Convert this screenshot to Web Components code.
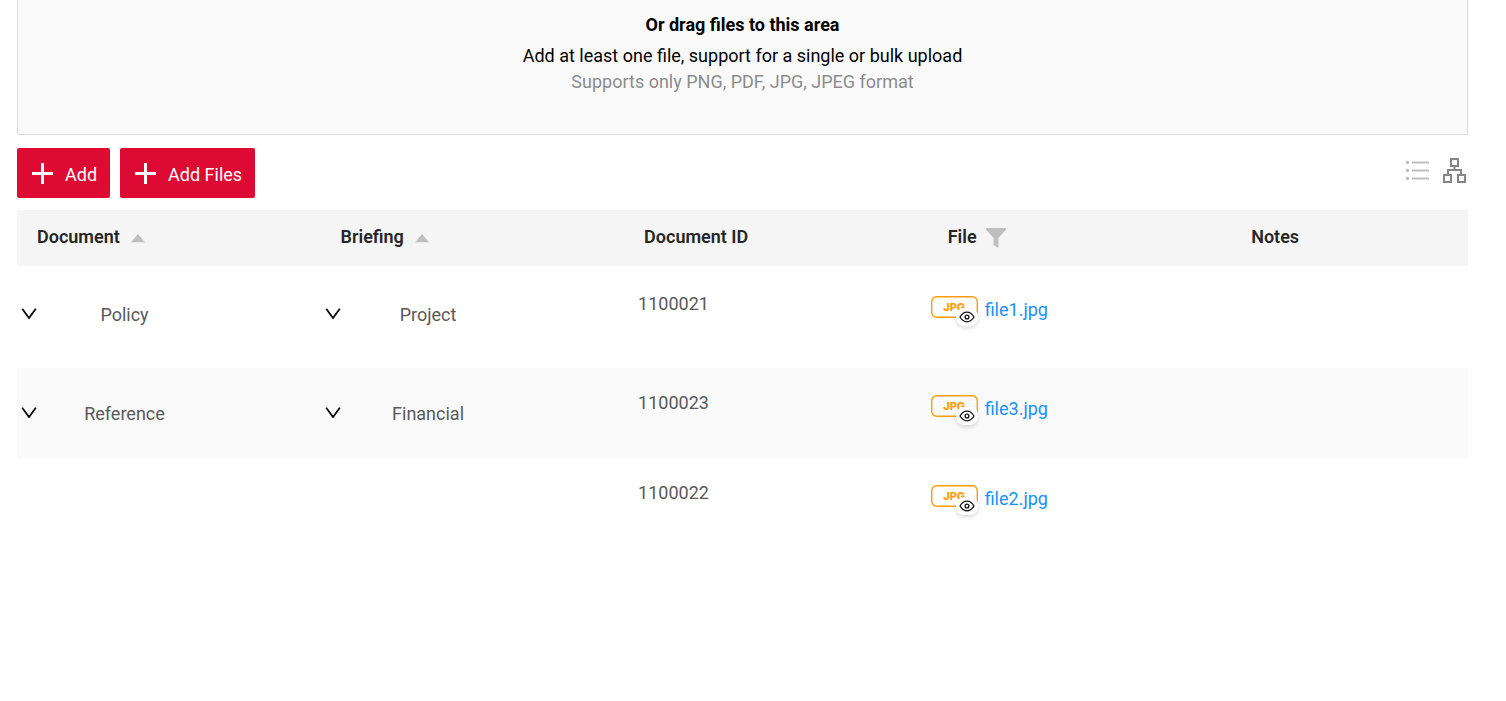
<!DOCTYPE html>
<html lang="en">
<head>
<meta charset="utf-8">
<title>Documents</title>
<style>
  body { margin: 0; background: #fff; font: 18px/26px Roboto, sans-serif; color: #595959; }
</style>
</head>
<body>
<documents-page></documents-page>
<script>
const define = (name, html, setup) => {
  const template = document.createElement('template');
  template.innerHTML = html;
  customElements.define(name, class extends HTMLElement {
    constructor() {
      super();
      this.attachShadow({ mode: 'open' }).append(template.content.cloneNode(true));
    }
    connectedCallback() { if (setup) setup(this, this.shadowRoot); }
  });
};

define('drop-area', `
  <style>
    :host { display: block; background: #fafafa; border: 1px solid #d9d9d9; border-top: 0;
            border-radius: 0 0 2px 2px; text-align: center; padding: 12px 16px 39px; color: #000; }
    p { margin: 0; }
    .title { font-weight: 700; margin-bottom: 5px; }
    .hint { color: #8c8c8c; }
  </style>
  <p class="title"><slot name="title"></slot></p>
  <p><slot></slot></p>
  <p class="hint"><slot name="hint"></slot></p>`);

define('add-button', `
  <style>
    :host { display: block; }
    button { display: flex; align-items: center; gap: 12px; height: 50px; padding: 4px 13px 0 15px; border: 0;
             border-radius: 2px; background: #dd0a34; color: #fff; font: inherit; cursor: pointer; }
    svg { display: block; width: 21px; height: 21px; margin-bottom: 4px; }
  </style>
  <button type="button">
    <svg viewBox="0 0 21 21" aria-hidden="true"><path d="M9 0h3v9h9v3h-9v9H9v-9H0V9h9z" fill="#fff"/></svg>
    <span><slot></slot></span>
  </button>`);

define('view-switch', `
  <style>
    :host { display: flex; gap: 12px; align-items: center; }
    button { display: block; border: 0; padding: 0; background: none; cursor: pointer; }
    svg { display: block; width: 25px; height: 26px; }
  </style>
  <button type="button" aria-label="List view">
    <svg viewBox="0 0 25 26" fill="none" stroke="#bfbfbf" stroke-width="2.200">
      <path d="M7 5.500h17M7 13.500h17M7 21.500h17"/>
      <g fill="#bfbfbf" stroke="none"><circle cx="2.5" cy="5.500" r="1.700"/><circle cx="2.5" cy="13.500" r="1.700"/><circle cx="2.5" cy="21.500" r="1.700"/></g>
    </svg>
  </button>
  <button type="button" aria-label="Tree view">
    <svg viewBox="0 0 25 26" fill="none" stroke="#858585" stroke-width="2">
      <path d="M9 2h7v7H9zM2 18h7v7H2zM16 18h7v7h-7z"/><path d="M12.500 9v4M6 18v-5h13v5"/>
    </svg>
  </button>`);

define('column-title', `
  <style>
    :host { display: flex; align-items: center; }
    button { display: none; border: 0; padding: 0; background: none; cursor: pointer; }
    :host([sortable]) .sort, :host([filterable]) .filter { display: block; }
    .sort { margin: 3px 0 0 11px; }
    .filter { margin: 2px 0 0 9px; }
    svg { display: block; }
  </style>
  <span><slot></slot></span>
  <button class="sort" type="button" aria-label="Sort">
    <svg width="14" height="9" viewBox="0 0 14 9"><path d="M7 0l7 8.200H0z" fill="#bfbfbf"/></svg>
  </button>
  <button class="filter" type="button" aria-label="Filter">
    <svg width="20" height="20" viewBox="0 0 20 20"><path d="M0 0h20v1.500L12.500 10v10L7.500 17.200V10L0 1.500z" fill="#bfbfbf"/></svg>
  </button>`);

define('tree-label', `
  <style>
    :host { display: flex; align-items: center; max-width: 191px; }
    button { flex: none; border: 0; padding: 0 0 2px; background: none; cursor: pointer; }
    svg { display: block; width: 16px; height: 12px; }
    span { flex: 1; text-align: center; }
  </style>
  <button type="button" aria-label="Collapse">
    <svg viewBox="0 0 16 12" fill="none" stroke="#000" stroke-width="1.700"><path d="M1.200 .8L8 10L14.800 .8"/></svg>
  </button>
  <span><slot></slot></span>`);

define('file-link', `
  <style>
    :host { display: flex; align-items: center; gap: 7px; }
    .type { position: relative; width: 47px; height: 22px; font: 800 11px/22px Inter, sans-serif;
            color: #ff9d0a; text-align: center; margin-bottom: 5px; }
    .frame { position: absolute; inset: 0; }
    button { position: absolute; right: 0; bottom: -8px; width: 22px; height: 18px; border: 0; padding: 0;
             border-radius: 8px; background: #fff; box-shadow: 0 2px 4px rgba(0, 0, 0, .15); cursor: pointer;
             display: grid; place-items: center; }
    svg { display: block; }
    a { color: #1890ff; text-decoration: none; }
  </style>
  <div class="type">
    <svg class="frame" width="47" height="22" viewBox="0 0 47 22" aria-hidden="true"><rect x=".7" y=".7" width="45.600" height="20.600" rx="5" fill="none" stroke="#ff9d0a" stroke-width="1.400"/></svg>
    JPG
    <button type="button" aria-label="Preview">
      <svg width="16" height="12" viewBox="0 0 16 12" fill="none" stroke="#111" stroke-width="1.300">
        <path d="M1 6C3 2.700 5.300 1.200 8 1.200S13 2.700 15 6C13 9.300 10.700 10.800 8 10.800S3 9.300 1 6z"/><circle cx="8" cy="6" r="1.900"/>
      </svg>
    </button>
  </div>
  <a href="#"><slot></slot></a>`);

define('document-table', `
  <style>
    :host { display: block; }
    table { width: 100%; border-collapse: collapse; table-layout: fixed; }
    col { width: 20.92%; }
    col:last-child { width: auto; }
    th { height: 56px; box-sizing: border-box; padding: 0 20px 2px; background: #f5f5f5; color: #262626; font-weight: 600; text-align: left; }
    td { height: 90px; box-sizing: border-box; padding: 0; vertical-align: top; }
    tbody tr:first-child td { height: 102px; padding-top: 3px; }
    tbody tr:nth-child(even) { background: #fafafa; }
    tree-label { margin: 33px 0 0 4px; }
    .id { display: block; margin: 22px 0 0 14px; }
    file-link { margin: 27px 0 0 3px; }
  </style>
  <table>
    <colgroup><col><col><col><col><col></colgroup>
    <thead><tr>
      <th scope="col"><column-title sortable>Document</column-title></th>
      <th scope="col"><column-title sortable>Briefing</column-title></th>
      <th scope="col"><column-title>Document ID</column-title></th>
      <th scope="col"><column-title filterable>File</column-title></th>
      <th scope="col"><column-title>Notes</column-title></th>
    </tr></thead>
    <tbody></tbody>
  </table>`, (host, root) => {
  const rows = [
    ['Policy', 'Project', '1100021', 'file1.jpg'],
    ['Reference', 'Financial', '1100023', 'file3.jpg'],
    ['', '', '1100022', 'file2.jpg']
  ];
  const label = text => text ? `<tree-label>${text}</tree-label>` : '';
  root.querySelector('tbody').innerHTML = rows.map(([doc, briefing, id, file]) => `
    <tr><td>${label(doc)}</td><td>${label(briefing)}</td><td><span class="id">${id}</span></td>
    <td><file-link>${file}</file-link></td><td></td></tr>`).join('');
});

define('documents-page', `
  <style>
    :host { display: block; padding: 0 38px 24px 17px; }
    .toolbar { display: flex; align-items: center; gap: 10px; margin: 13px 0 12px; }
    view-switch { margin: 0 1px 6px auto; }
  </style>
  <main>
    <drop-area>
      <span slot="title">Or drag files to this area</span>
      Add at least one file, support for a single or bulk upload
      <span slot="hint">Supports only PNG, PDF, JPG, JPEG format</span>
    </drop-area>
    <div class="toolbar">
      <add-button>Add</add-button>
      <add-button>Add Files</add-button>
      <view-switch></view-switch>
    </div>
    <document-table></document-table>
  </main>`);
</script>
</body>
</html>
